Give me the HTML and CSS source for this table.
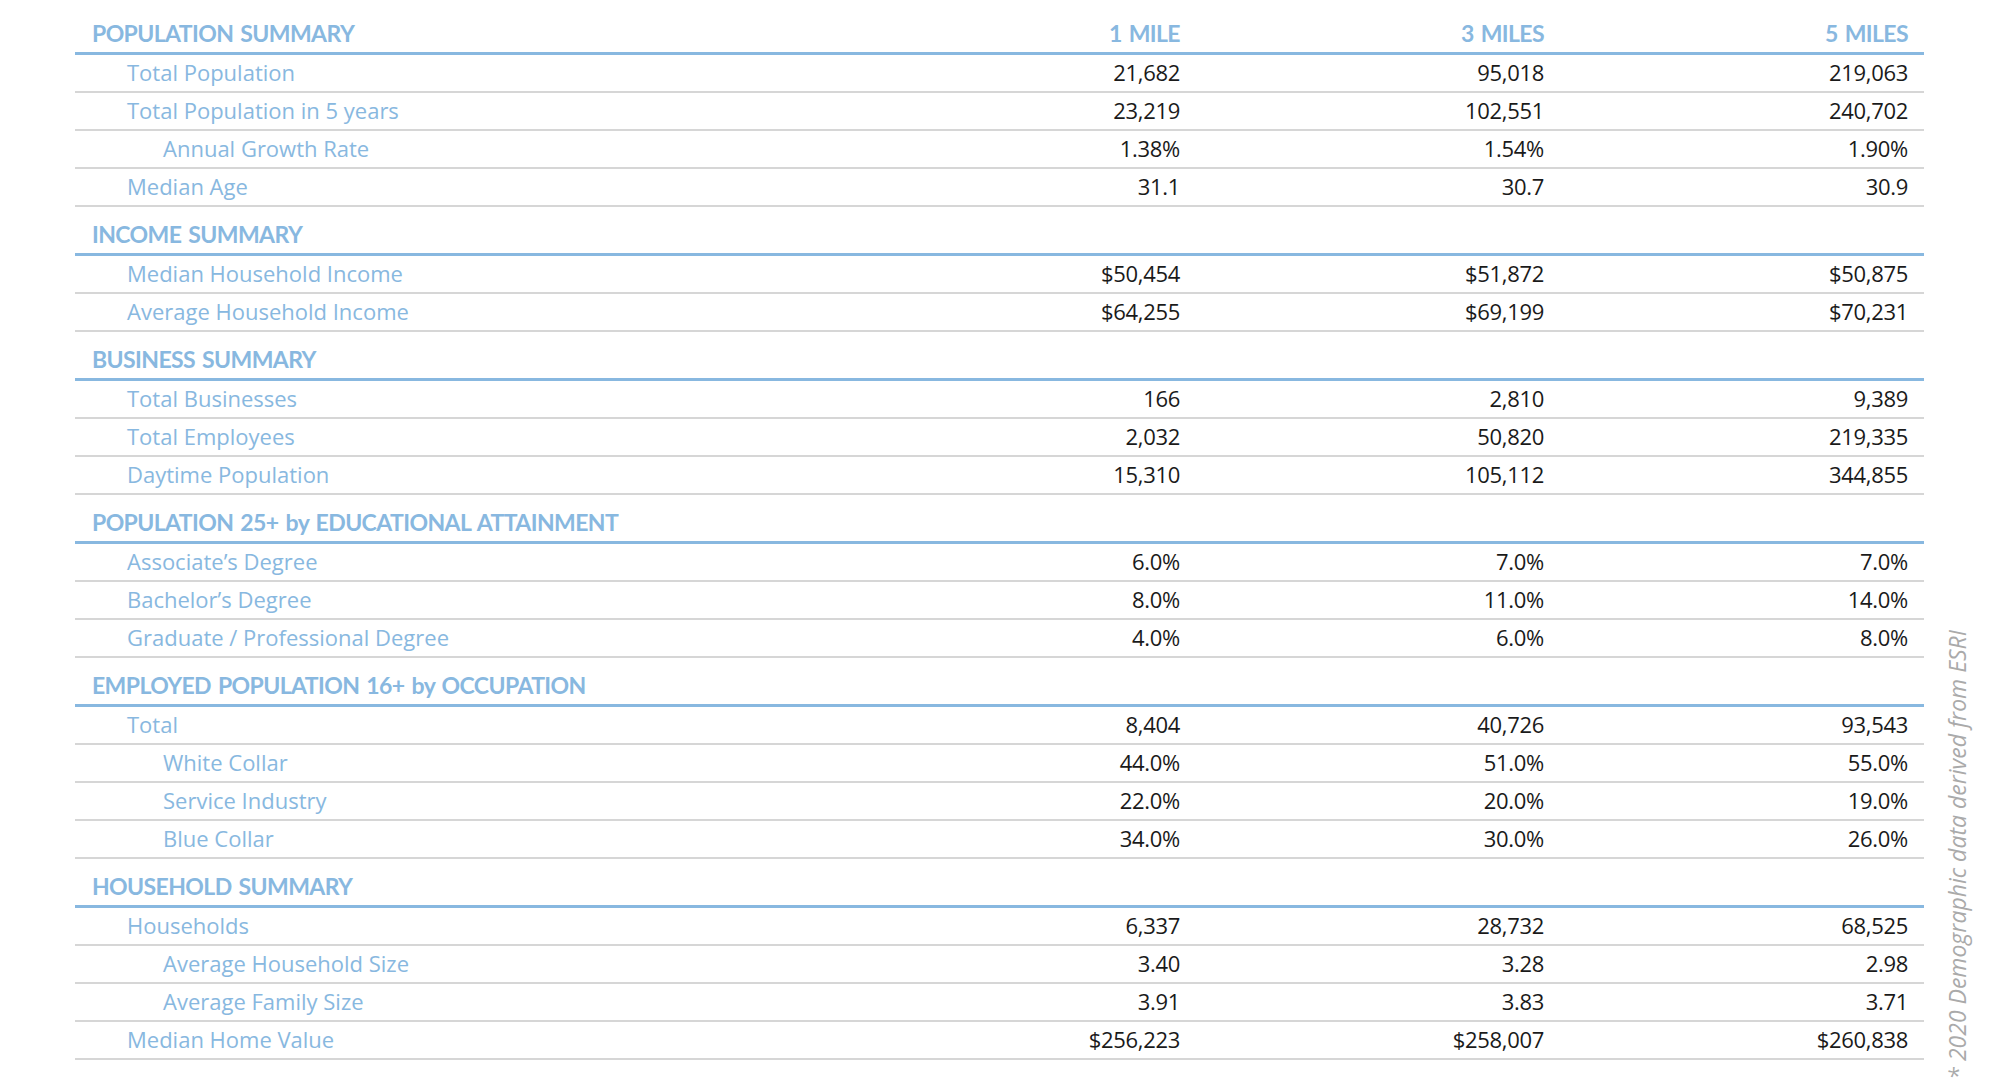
FILE: index.html
```html
<!DOCTYPE html>
<html lang="en">
<head>
<meta charset="utf-8">
<title>Demographics</title>
<link rel="stylesheet" href="styles.css">
</head>
<body>
<div class="page">
  <div class="table">
    <div class="head">
      <div class="title">POPULATION SUMMARY</div>
      <div class="col">1 MILE</div>
      <div class="col">3 MILES</div>
      <div class="col">5 MILES</div>
    </div>
    <div class="row"><div class="label">Total Population</div><div class="val">21,682</div><div class="val">95,018</div><div class="val">219,063</div></div>
    <div class="row"><div class="label">Total Population in 5 years</div><div class="val">23,219</div><div class="val">102,551</div><div class="val">240,702</div></div>
    <div class="row sub"><div class="label">Annual Growth Rate</div><div class="val">1.38%</div><div class="val">1.54%</div><div class="val">1.90%</div></div>
    <div class="row"><div class="label">Median Age</div><div class="val">31.1</div><div class="val">30.7</div><div class="val">30.9</div></div>

    <div class="head"><div class="title">INCOME SUMMARY</div></div>
    <div class="row"><div class="label">Median Household Income</div><div class="val">$50,454</div><div class="val">$51,872</div><div class="val">$50,875</div></div>
    <div class="row"><div class="label">Average Household Income</div><div class="val">$64,255</div><div class="val">$69,199</div><div class="val">$70,231</div></div>

    <div class="head"><div class="title">BUSINESS SUMMARY</div></div>
    <div class="row"><div class="label">Total Businesses</div><div class="val">166</div><div class="val">2,810</div><div class="val">9,389</div></div>
    <div class="row"><div class="label">Total Employees</div><div class="val">2,032</div><div class="val">50,820</div><div class="val">219,335</div></div>
    <div class="row"><div class="label">Daytime Population</div><div class="val">15,310</div><div class="val">105,112</div><div class="val">344,855</div></div>

    <div class="head"><div class="title">POPULATION 25+ by EDUCATIONAL ATTAINMENT</div></div>
    <div class="row"><div class="label">Associate’s Degree</div><div class="val">6.0%</div><div class="val">7.0%</div><div class="val">7.0%</div></div>
    <div class="row"><div class="label">Bachelor’s Degree</div><div class="val">8.0%</div><div class="val">11.0%</div><div class="val">14.0%</div></div>
    <div class="row"><div class="label">Graduate / Professional Degree</div><div class="val">4.0%</div><div class="val">6.0%</div><div class="val">8.0%</div></div>

    <div class="head"><div class="title">EMPLOYED POPULATION 16+ by OCCUPATION</div></div>
    <div class="row"><div class="label">Total</div><div class="val">8,404</div><div class="val">40,726</div><div class="val">93,543</div></div>
    <div class="row sub"><div class="label">White Collar</div><div class="val">44.0%</div><div class="val">51.0%</div><div class="val">55.0%</div></div>
    <div class="row sub"><div class="label">Service Industry</div><div class="val">22.0%</div><div class="val">20.0%</div><div class="val">19.0%</div></div>
    <div class="row sub"><div class="label">Blue Collar</div><div class="val">34.0%</div><div class="val">30.0%</div><div class="val">26.0%</div></div>

    <div class="head"><div class="title">HOUSEHOLD SUMMARY</div></div>
    <div class="row"><div class="label">Households</div><div class="val">6,337</div><div class="val">28,732</div><div class="val">68,525</div></div>
    <div class="row sub"><div class="label">Average Household Size</div><div class="val">3.40</div><div class="val">3.28</div><div class="val">2.98</div></div>
    <div class="row sub"><div class="label">Average Family Size</div><div class="val">3.91</div><div class="val">3.83</div><div class="val">3.71</div></div>
    <div class="row"><div class="label">Median Home Value</div><div class="val">$256,223</div><div class="val">$258,007</div><div class="val">$260,838</div></div>
  </div>
  <div class="note">* 2020 Demographic data derived from ESRI</div>
</div>
</body>
</html>
```

FILE: styles.css
```css
html, body {
  margin: 0;
  padding: 0;
  background: #ffffff;
}

.page {
  width: 2000px;
  height: 1080px;
  box-sizing: border-box;
  padding: 6px 0 0 75px;
  display: flex;
  align-items: flex-start;
  overflow: hidden;
}

.table {
  width: 1849px;
  display: flex;
  flex-direction: column;
}

.head,
.row {
  display: grid;
  grid-template-columns: 1fr 364px 364px 364px;
  align-items: end;
  box-sizing: border-box;
}

.head {
  height: 49px;
  border-bottom: 3px solid #88b8e0;
  padding-bottom: 3px;
  font-family: "Lato", "Liberation Sans", sans-serif;
  font-weight: 700;
  font-size: 23px;
  line-height: 31px;
  letter-spacing: -0.6px;
  word-spacing: 2px;
  color: #88b8e0;
}

.title {
  padding-left: 17px;
  white-space: nowrap;
}

.col {
  text-align: right;
  padding-right: 16px;
}

.row {
  height: 38px;
  border-bottom: 2px solid #d6d6d6;
  padding-bottom: 3px;
  line-height: 31px;
}

.label {
  padding-left: 52px;
  font-family: "Open Sans", "Liberation Sans", sans-serif;
  font-size: 22px;
  color: #88b8e0;
  white-space: nowrap;
}

.sub .label {
  padding-left: 88px;
}

.val {
  text-align: right;
  padding-right: 16px;
  font-family: "Open Sans", "Liberation Sans", sans-serif;
  font-size: 22px;
  letter-spacing: -0.3px;
  color: #1a1a1a;
}

.note {
  align-self: flex-end;
  margin: 0 0 0 17px;
  writing-mode: vertical-rl;
  transform: rotate(180deg);
  font-family: "Open Sans", "Liberation Sans", sans-serif;
  font-style: italic;
  font-size: 23px;
  color: #aaaaaa;
  white-space: nowrap;
}
```
